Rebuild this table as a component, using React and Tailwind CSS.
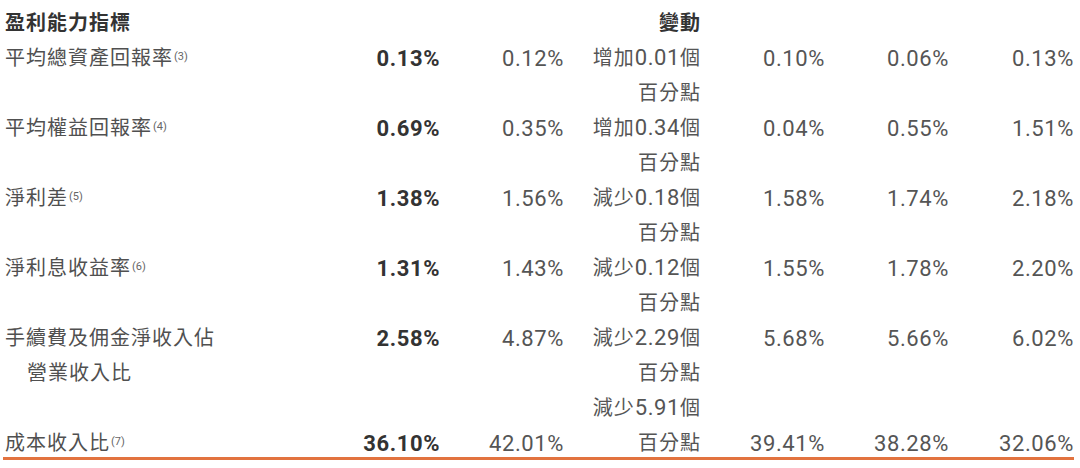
import React from 'react';

const rows = [
  { label: ['平均總資產回報率'], note: '(3)', cur: '0.13%', prev: '0.12%', dir: '增加', amt: '0.01', rest: ['0.10%', '0.06%', '0.13%'] },
  { label: ['平均權益回報率'], note: '(4)', cur: '0.69%', prev: '0.35%', dir: '增加', amt: '0.34', rest: ['0.04%', '0.55%', '1.51%'] },
  { label: ['淨利差'], note: '(5)', cur: '1.38%', prev: '1.56%', dir: '減少', amt: '0.18', rest: ['1.58%', '1.74%', '2.18%'] },
  { label: ['淨利息收益率'], note: '(6)', cur: '1.31%', prev: '1.43%', dir: '減少', amt: '0.12', rest: ['1.55%', '1.78%', '2.20%'] },
  { label: ['手續費及佣金淨收入佔', '營業收入比'], cur: '2.58%', prev: '4.87%', dir: '減少', amt: '2.29', rest: ['5.68%', '5.66%', '6.02%'] },
  { label: ['成本收入比'], note: '(7)', cur: '36.10%', prev: '42.01%', dir: '減少', amt: '5.91', rest: ['39.41%', '38.28%', '32.06%'], bottom: true },
];

const cols = 'grid grid-cols-[337px_100px_124px_137px_124px_124px_125px]';
const num = 'text-[22px] tracking-[0.6px]';

const Label = ({ row }) => (
  <div className="text-[#505050]">
    <div className="whitespace-nowrap">
      {row.label[0]}
      {row.note && <span className="ml-[1px] text-[11px] tracking-normal align-[5px] leading-none text-[#666]">{row.note}</span>}
    </div>
    {row.label[1] && <div className="pl-[22px] whitespace-nowrap">{row.label[1]}</div>}
  </div>
);

const App = () => {
  return (
    <div className="w-[1080px] h-[468px] bg-white pt-[6px] pl-[3px]" style={{ fontFamily: 'Roboto, "Noto Sans CJK TC", sans-serif' }}>
      <div className="w-[1071px] border-b-[3px] border-[#e2733f] text-[20px] leading-[35px] tracking-[1px] text-[#555]">
        <div className={cols}>
          <div className="pl-[2px] font-bold text-[#333]">盈利能力指標</div>
          <div />
          <div />
          <div className="text-right font-bold text-[#333]">變動</div>
        </div>

        {rows.map((row, i) => (
          <div key={i} className={`${cols} ${row.bottom ? 'items-end -mb-[4px]' : 'items-start'}`}>
            <div className="pl-[2px]"><Label row={row} /></div>
            <div className={`text-right font-bold text-[#333] ${num}`}>{row.cur}</div>
            <div className={`text-right ${num}`}>{row.prev}</div>
            <div className="text-right">
              <div className="h-[35px]">{row.dir}<span className={`${num} leading-none`}>{row.amt}</span>個</div>
              <div>百分點</div>
            </div>
            {row.rest.map((v, j) => (
              <div key={j} className={`text-right ${num}`}>{v}</div>
            ))}
          </div>
        ))}
      </div>
    </div>
  );
};

export default App;
